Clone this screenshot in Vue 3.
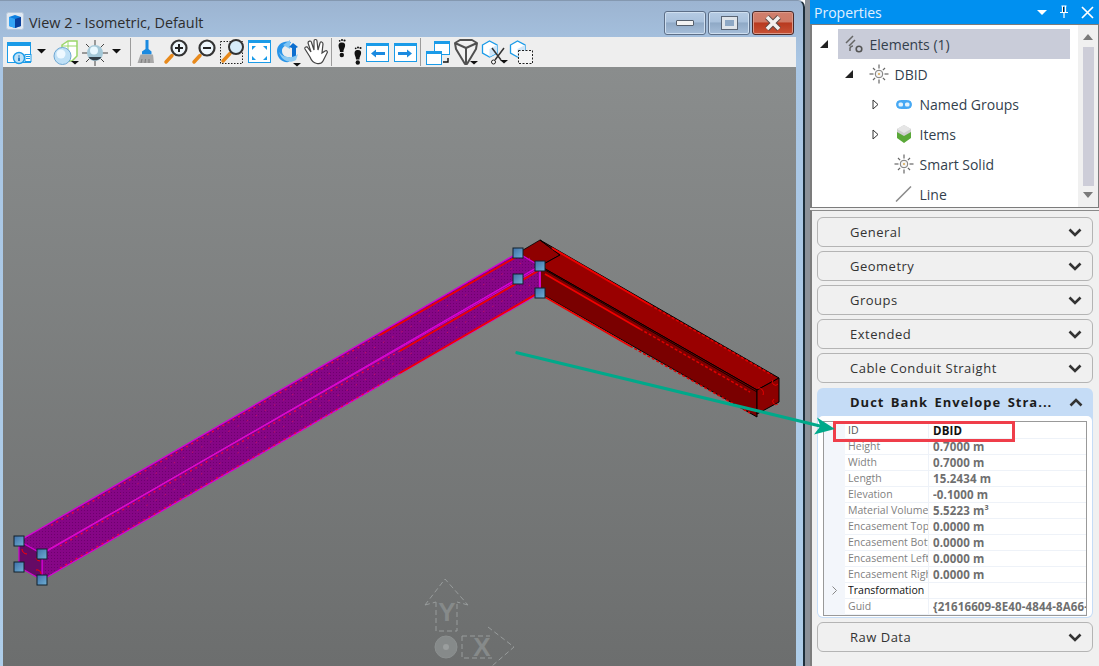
<script setup>
const tree = [
  { label: 'Elements (1)', level: 0, arrow: 'open', icon: 'elements', selected: true },
  { label: 'DBID', level: 1, arrow: 'open', icon: 'sun' },
  { label: 'Named Groups', level: 2, arrow: 'closed', icon: 'pill' },
  { label: 'Items', level: 2, arrow: 'closed', icon: 'items' },
  { label: 'Smart Solid', level: 2, arrow: '', icon: 'sun' },
  { label: 'Line', level: 2, arrow: '', icon: 'line' }
]
const sectionsTop = ['General', 'Geometry', 'Groups', 'Extended', 'Cable Conduit Straight']
const props = [
  { name: 'ID', value: 'DBID', strong: true },
  { name: 'Height', value: '0.7000 m' },
  { name: 'Width', value: '0.7000 m' },
  { name: 'Length', value: '15.2434 m' },
  { name: 'Elevation', value: '-0.1000 m' },
  { name: 'Material Volume', value: '5.5223 m³' },
  { name: 'Encasement Top', value: '0.0000 m' },
  { name: 'Encasement Bottom', value: '0.0000 m' },
  { name: 'Encasement Left', value: '0.0000 m' },
  { name: 'Encasement Right', value: '0.0000 m' },
  { name: 'Transformation', value: '', group: true },
  { name: 'Guid', value: '{21616609-8E40-4844-8A66-0F2B' }
]
const handles = [
  [518, 253], [540, 266], [518, 279], [540, 293],
  [19, 541], [42, 554], [19, 567], [42, 580]
]
const rays = [0, 45, 90, 135, 180, 225, 270, 315]
</script>

<template>
  <div class="page">
    <section class="win">
      <header class="titlebar">
        <svg class="appicon" viewBox="0 0 18 18">
          <rect x="0.5" y="0.5" width="17" height="17" rx="2" fill="#dfe8f2" stroke="#b8c8da" />
          <path d="M3 5 L9 3 L15 5 V14 L9 16 L3 14 Z" fill="#0d7fe0" />
          <path d="M3 5 L9 7 V16 L3 14 Z" fill="#35a5f5" />
          <path d="M9 7 L15 5 V14 L9 16 Z" fill="#0a3f9c" />
        </svg>
        <span class="title">View 2 - Isometric, Default</span>
        <div class="winbtns">
          <button class="wb"><span class="glyph-min"></span></button>
          <button class="wb"><span class="glyph-max"></span></button>
          <button class="wb close">
            <svg width="20" height="16" viewBox="0 0 20 16">
              <path d="M4 2 L16 14 M16 2 L4 14" stroke="#5c4a48" stroke-width="5.4" />
              <path d="M4 2 L16 14 M16 2 L4 14" stroke="#f4f0ee" stroke-width="3.6" />
            </svg>
          </button>
        </div>
      </header>

      <div class="toolbar">
        <svg class="ic" viewBox="0 0 28 30">
          <rect x="3.5" y="5.5" width="23" height="20" fill="#fff" stroke="#1b9be8" />
          <rect x="3" y="5" width="24" height="4" fill="#1b9be8" />
          <circle cx="15" cy="21" r="5.5" fill="#bfe2f8" stroke="#1b9be8" stroke-width="1.4" />
          <path d="M15 18.5v1M15 20.5v3.5" stroke="#0b6fc0" stroke-width="1.6" />
          <rect x="21" y="17.5" width="6" height="7" fill="#fff" stroke="#1b9be8" />
          <path d="M22 19.5h4M22 21.5h4" stroke="#1b9be8" />
        </svg>
        <svg class="car" viewBox="0 0 18 30"><path d="M5 12h9l-4.500 4.500z" fill="#111" /></svg>
        <svg class="ic" viewBox="0 0 28 30">
          <path d="M12 8 L18 4 H27 V19 L22 24 H12 Z" fill="#fff" stroke="#9ad66a" stroke-width="1.500" />
          <path d="M18 4 V9 H27 M18 9 L12 9 M18 9 V15" stroke="#9ad66a" fill="none" />
          <circle cx="12.500" cy="19" r="8.500" fill="#bfe0f6" stroke="#6fa8d4" />
          <circle cx="11" cy="17" r="4.500" fill="#eef8ff" />
          <path d="M21 24h8l-4 3.500z" fill="#111" />
        </svg>
        <svg class="ic sunic" viewBox="0 0 28 30">
          <path d="M15 3v26M2 16h26M6 7l18 18M24 7L6 25" stroke="#444" stroke-width="1" />
          <circle cx="15" cy="16" r="8" fill="#a4c8d8" />
          <circle cx="14" cy="13.500" r="4" fill="#e8f8ff" />
          <path d="M8.500 20a8 8 0 0 0 13 0z" fill="#333f48" />
        </svg>
        <svg class="car" viewBox="0 0 18 30"><path d="M4 12h9l-4.500 4.500z" fill="#111" /></svg>
        <i class="sep first"></i>
        <svg class="ic" viewBox="0 0 28 30">
          <path d="M11.500 3h3v9l3 2.500v3H8v-3l3.500-2.500z" fill="#1b8ae0" />
          <path d="M6.500 17.500h12.500l1 8.500H3.500z" fill="#a8a8a8" />
          <path d="M7 26l1-4M11 26l.5-4M15 26l0-4" stroke="#7c7c7c" />
        </svg>
        <svg class="ic" viewBox="0 0 28 30">
          <path d="M4 25 L10 18.500" stroke="#e88a1c" stroke-width="3.500" stroke-linecap="round" />
          <circle cx="17" cy="11" r="7.500" fill="#eef6fb" stroke="#333" stroke-width="2.200" />
          <path d="M13 11h8M17 7v8" stroke="#222" stroke-width="2" />
        </svg>
        <svg class="ic" viewBox="0 0 28 30">
          <path d="M4 25 L10 18.500" stroke="#e88a1c" stroke-width="3.500" stroke-linecap="round" />
          <circle cx="17" cy="11" r="7.500" fill="#eef6fb" stroke="#333" stroke-width="2.200" />
          <path d="M13 11h8" stroke="#222" stroke-width="2" />
        </svg>
        <svg class="ic" viewBox="0 0 28 30">
          <rect x="2.500" y="4.500" width="22" height="22" fill="none" stroke="#222" stroke-dasharray="1.500 1.500" />
          <path d="M5 24 L12 16.500" stroke="#e88a1c" stroke-width="3.500" stroke-linecap="round" />
          <circle cx="18" cy="10" r="7" fill="#d6ecfa" stroke="#333" stroke-width="2" />
        </svg>
        <svg class="ic" viewBox="0 0 28 30">
          <rect x="2.500" y="3.500" width="22" height="22" fill="#fff" stroke="#1b9be8" />
          <rect x="2" y="3" width="23" height="3" fill="#1b9be8" />
          <path d="M6 9h4L6 13zM21 9h-4l4 4zM6 23h4l-4-4zM21 23h-4l4-4z" fill="#1b9be8" />
        </svg>
        <svg class="ic" viewBox="0 0 28 30">
          <path d="M3 14 C3 7 10 3 17 5 L15 9 C11 8 8 10 8 14 C8 18 12 21 16 20 L15 25 C8 26 3 21 3 14Z" fill="#2a94e8" />
          <path d="M16 3 L9 8 L16 12Z" fill="#7cc4f4" />
          <path d="M19 6 L24 10 L22 11 V21 H18 V11 L15 10Z" fill="#0d6fd0" />
          <path d="M5 15 C9 21 18 22 24 17 L22 23 C15 27 8 24 5 15Z" fill="#8ccaf2" />
          <path d="M19 26h8l-4 3.500z" fill="#111" />
        </svg>
        <svg class="ic" viewBox="0 0 28 30">
          <path d="M8 20 L3 12 C2 10 5 9 6 11 L9 15 L6 6 C6 4 9 3 9.500 5.500 L12 13 L12 4 C12 2 15 2 15 4 L16 13 L18 6 C18.500 4 21 5 21 7 L20 16 L23 14 C25 13 26 15 25 16 L21 24 C19 28 11 28 8 20Z" fill="#fff" stroke="#444" stroke-width="1.200" />
        </svg>
        <i class="sep"></i>
        <svg class="ic" viewBox="0 0 28 30">
          <path d="M3.500 8.500 C3.500 6 5.500 5.500 7 5.500 C9.500 5.500 10.500 7 10 9.500 C9.500 11.500 8.500 12.500 8.500 14 L8.500 15 L5 15 C5 12.500 3.500 11 3.500 8.500Z" fill="#111" />
          <ellipse cx="6.800" cy="18" rx="2.200" ry="2.300" fill="#111" />
          <circle cx="9.500" cy="3.500" r="1.100" fill="#111" /><circle cx="7" cy="3" r="1" fill="#111" /><circle cx="4.700" cy="3.800" r="0.900" fill="#111" />
          <path d="M19.500 16 C19.500 13.500 21.500 13 23 13 C25.500 13 26.500 14.500 26 17 C25.500 19 24.500 20 24.500 21.500 L24.500 22.500 L21 22.500 C21 20 19.500 18.500 19.500 16Z" fill="#111" />
          <ellipse cx="22.800" cy="25.500" rx="2.200" ry="2.300" fill="#111" />
          <circle cx="25.500" cy="11" r="1.100" fill="#111" /><circle cx="23" cy="10.500" r="1" fill="#111" /><circle cx="20.700" cy="11.300" r="0.900" fill="#111" />
        </svg>
        <svg class="ic" viewBox="0 0 28 30">
          <rect x="3.500" y="6.500" width="22" height="18" fill="#fff" stroke="#1b9be8" />
          <rect x="3" y="6" width="23" height="3" fill="#1b9be8" />
          <path d="M8 16.500 L13 12.500 V15 H22 V18 H13 V20.500Z" fill="#1b8ae0" />
        </svg>
        <svg class="ic" viewBox="0 0 28 30">
          <rect x="3.500" y="6.500" width="22" height="18" fill="#fff" stroke="#1b9be8" />
          <rect x="3" y="6" width="23" height="3" fill="#1b9be8" />
          <path d="M21 16.500 L16 12.500 V15 H7 V18 H16 V20.500Z" fill="#1b8ae0" />
        </svg>
        <i class="sep"></i>
        <svg class="ic" viewBox="0 0 28 30">
          <rect x="10.500" y="5.500" width="15" height="12" fill="#fff" stroke="#1b9be8" />
          <rect x="10" y="4" width="16" height="3" fill="#1b9be8" />
          <rect x="2.500" y="15.500" width="15" height="12" fill="#fff" stroke="#1b9be8" />
          <rect x="2" y="14" width="16" height="3" fill="#1b9be8" />
          <path d="M19 25h5v-4" fill="none" stroke="#111" stroke-width="1.400" />
        </svg>
        <svg class="ic" viewBox="0 0 28 30">
          <path d="M3 6 L8 3 H20 L25 6 L24 12 L15 27 L13 27 L4 12 Z M3 6 L14 11 L25 6 M14 11 V27" fill="#f2f2f2" stroke="#505050" stroke-width="2" stroke-linejoin="round" />
          <path d="M18 24h8l-4 3.500z" fill="#111" />
        </svg>
        <svg class="ic" viewBox="0 0 28 30">
          <path d="M2.500 8 L9.500 4 L17 8 V16 L9.500 20 L2.500 16Z" fill="#fff" stroke="#1b9be8" stroke-width="1.300" />
          <path d="M9.500 12 L17 8 V16 L9.500 20Z" fill="#cfe6f8" />
          <path d="M12 11 L21 23 M24 11 L15 23" stroke="#333" stroke-width="1.500" />
          <circle cx="13.500" cy="25" r="2" fill="#fff" stroke="#222" />
          <path d="M20 23h8l-4 3.500z" fill="#111" />
        </svg>
        <svg class="ic" viewBox="0 0 28 30">
          <path d="M2.500 8 L9.500 4 L17 8 V16 L9.500 20 L2.500 16Z" fill="#fff" stroke="#1b9be8" stroke-width="1.300" />
          <path d="M9.500 12 L17 8 V16 L9.500 20Z" fill="#cfe6f8" />
          <rect x="10.500" y="13.500" width="14" height="13" fill="#f4f4f4" stroke="#222" stroke-dasharray="2 1.500" />
        </svg>
      </div>

      <div class="viewport">
        <svg class="model" viewBox="3 67 793 599">
          <defs>
            <linearGradient id="hf" x1="0" y1="0" x2="1" y2="1">
              <stop offset="0" stop-color="#3f6fa8" />
              <stop offset="1" stop-color="#6fb0d4" />
            </linearGradient>
            <pattern id="hatch" width="3" height="3" patternUnits="userSpaceOnUse">
              <rect width="3" height="3" fill="#860686" />
              <rect width="1" height="1" fill="#6e006e" />
            </pattern>
          </defs>
          <polygon points="518,253 540,240 560,255 540,266" fill="#8f0000" stroke="#000" stroke-width="0.800" />
          <polygon points="540,240 779,378 757,390 540,266 560,255" fill="#990000" stroke="#000" />
          <polygon points="540,266 757,390 757,417 540,293" fill="#7a0000" stroke="#000" />
          <polygon points="757,390 779,378 779,402 757,414" fill="#8c0000" stroke="#000" />
          <path d="M545 270 L757 392" stroke="#000" stroke-width="0.800" />
          <path d="M552 248 L650 305" stroke="#f00000" stroke-width="2" />
          <path d="M650 305 L772 375" stroke="#e00000" stroke-width="1.600" stroke-dasharray="3 2" />
          <path d="M545 274 L640 329" stroke="#f00000" stroke-width="1.800" />
          <path d="M640 329 L750 392" stroke="#e00000" stroke-width="1.500" stroke-dasharray="3 2" />
          <path d="M545 297 L630 346" stroke="#f00000" stroke-width="1.800" />
          <path d="M630 346 L750 413" stroke="#e00000" stroke-width="1.500" stroke-dasharray="3 2" />
          <path d="M773 380 a3 3 0 0 0 5 4 M774 399 a3 3 0 0 0 4 5 M758 388 a5 5 0 0 1 5 7" fill="none" stroke="#f00" stroke-width="0.800" />

          <polygon points="518,253 540,266 42,554 19,541" fill="url(#hatch)" stroke="#d800d8" stroke-width="1.300" />
          <polygon points="540,266 540,293 42,580 42,554" fill="url(#hatch)" stroke="#d800d8" stroke-width="1.300" />
          <polygon points="19,541 42,554 42,580 19,567" fill="#650a65" stroke="#d000d0" stroke-width="1.200" />
          <path d="M42 553 L540 268" stroke="#e010c0" stroke-width="0.900" />
          <path d="M518 256 L380 335" stroke="#f00000" stroke-width="1.800" />
          <path d="M380 335 L50 526" stroke="#f00040" stroke-width="1.400" stroke-dasharray="2 4" />
          <path d="M538 271 L400 351" stroke="#f00000" stroke-width="1.800" />
          <path d="M400 351 L60 546" stroke="#f00040" stroke-width="1.400" stroke-dasharray="2 4" />
          <path d="M538 293 L400 373" stroke="#f00000" stroke-width="1.800" />
          <path d="M400 373 L60 568" stroke="#f00040" stroke-width="1.400" stroke-dasharray="2 4" />
          <path d="M530 258 L120 494" stroke="#c81060" stroke-width="1" stroke-dasharray="1.500 9" />
          <path d="M530 285 L130 515" stroke="#c81060" stroke-width="1" stroke-dasharray="1.500 9" />
          <path d="M22 549 a5 5 0 0 0 5 5 M36 570 a4 4 0 0 1 5 4 M36 558 a4 4 0 0 0 4 3" fill="none" stroke="#f00" />
          <path d="M540 266 V293" stroke="#f010e0" stroke-width="1.200" />

          <rect v-for="(h, i) in handles" :key="i" :x="h[0] - 5" :y="h[1] - 5" width="10" height="10" fill="url(#hf)" stroke="#10202c" stroke-width="1" />

          <g class="triad">
            <path d="M425 605 L445 579 L468 605 M436 602 V631 H457 V602 M425 605 L436 602 M468 605 L457 602" />
            <path d="M462 636 H490 M462 636 V658 H492 M488 627 L514 647 L492 666" />
            <circle cx="446" cy="647" r="11" class="hub" />
            <circle cx="446" cy="647" r="3" class="hubdot" />
            <text x="447" y="621" class="axis">Y</text>
            <text x="482" y="656" class="axis">X</text>
          </g>
        </svg>
      </div>
    </section>

    <div class="divider"></div>

    <aside class="panel">
      <header class="panelhead">
        <span>Properties</span>
        <div class="headicons">
          <svg width="10" height="5" viewBox="0 0 10 5"><path d="M0 0h10L5 5z" fill="#fff" /></svg>
          <svg width="10" height="14" viewBox="0 0 10 14"><path d="M2.500 1h5M3.500 1v6M6.500 1v6M1 7.500h8M5 8v5" stroke="#fff" stroke-width="1.200" fill="none" /><path d="M4.500 2v5" stroke="#222" stroke-width="1" /></svg>
          <svg width="13" height="13" viewBox="0 0 13 13"><path d="M1 1L12 12M12 1L1 12" stroke="#fff" stroke-width="1.700" /></svg>
        </div>
      </header>

      <div class="treebox">
        <div class="tree">
          <div v-for="row in tree" :key="row.label + row.level" class="row" :style="{ paddingLeft: 8 + row.level * 25 + 'px' }">
            <span class="arrow" :class="{ shut: row.arrow === 'closed' }">
              <svg v-if="row.arrow === 'open'" width="8" height="8" viewBox="0 0 8 8"><path d="M8 0V8H0z" fill="#222" /></svg>
              <svg v-else-if="row.arrow === 'closed'" width="7" height="11" viewBox="0 0 7 11"><path d="M1 1L6 5.500L1 10z" fill="#fff" stroke="#333" /></svg>
            </span>
            <div class="cell" :class="{ selected: row.selected }">
              <span class="ticon">
                <svg v-if="row.icon === 'elements'" width="18" height="18" viewBox="0 0 18 18">
                  <path d="M1 8L8 1M4 11L10 5" stroke="#666" stroke-width="1.500" />
                  <path d="M5 16V13a3 3 0 0 1 3-2" stroke="#666" stroke-width="1.500" fill="none" />
                  <circle cx="14" cy="14" r="2.800" fill="none" stroke="#555" stroke-width="1.600" />
                </svg>
                <svg v-else-if="row.icon === 'sun'" width="20" height="20" viewBox="0 0 20 20">
                  <g stroke="#666" stroke-width="1.200">
                    <line v-for="r in rays" :key="r" x1="10" y1="4.500" x2="10" :y2="r % 90 ? 1.500 : 0.500" :transform="`rotate(${r} 10 10)`" />
                  </g>
                  <circle cx="10" cy="10" r="3.800" fill="#f4f4f4" stroke="#777" />
                  <circle cx="10" cy="10" r="1" fill="#d8a850" />
                </svg>
                <svg v-else-if="row.icon === 'pill'" width="16" height="9" viewBox="0 0 16 9">
                  <rect x="0.500" y="0.500" width="15" height="8" rx="4" fill="#46a8f4" stroke="#46a8f4" />
                  <rect x="2.500" y="2.500" width="4.500" height="4" rx="1.500" fill="#e4f3fd" />
                  <rect x="9" y="2.500" width="4.500" height="4" rx="1.500" fill="#e4f3fd" />
                </svg>
                <svg v-else-if="row.icon === 'items'" width="14" height="18" viewBox="0 0 14 18">
                  <path d="M7 0L14 4V11L7 15L0 11V4Z" fill="#cfcfcf" />
                  <path d="M7 0L14 4L7 8L0 4Z" fill="#e6e6e6" />
                  <path d="M0 7L7 11L14 7V13L7 18L0 13Z" fill="#5aa838" />
                </svg>
                <svg v-else width="17" height="16" viewBox="0 0 17 16"><path d="M1 15.500L16 .5" stroke="#8a8a8a" stroke-width="1.500" /></svg>
              </span>
              <span class="tlabel">{{ row.label }}</span>
            </div>
          </div>
        </div>
        <div class="scroll">
          <svg width="10" height="6" viewBox="0 0 10 6"><path d="M0 6L5 0L10 6z" fill="#7a7a7a" /></svg>
          <div class="thumb"></div>
          <svg width="10" height="6" viewBox="0 0 10 6"><path d="M0 0L5 6L10 0z" fill="#7a7a7a" /></svg>
        </div>
      </div>

      <div class="accordion">
        <div v-for="s in sectionsTop" :key="s" class="exp">
          <span>{{ s }}</span>
          <svg class="chev" width="14" height="9" viewBox="0 0 14 9"><path d="M1.500 1.500L7 7L12.500 1.500" fill="none" stroke="#333" stroke-width="2.600" /></svg>
        </div>

        <div class="open">
          <div class="openhead">
            <span>Duct Bank Envelope Stra...</span>
            <svg class="chev" width="14" height="9" viewBox="0 0 14 9"><path d="M1.500 7.500L7 2L12.500 7.500" fill="none" stroke="#333" stroke-width="2.600" /></svg>
          </div>
          <div class="openbody">
            <div class="table">
              <div v-for="p in props" :key="p.name" class="prow">
                <span class="gutter">
                  <svg v-if="p.group" width="5" height="9" viewBox="0 0 5 9"><path d="M.5 .5L4.500 4.500L.5 8.500" fill="none" stroke="#888" /></svg>
                </span>
                <span class="pname" :class="{ idname: p.strong, grp: p.group }">{{ p.name }}</span>
                <span class="pval" :class="{ strong: p.strong }">{{ p.value }}</span>
              </div>
            </div>
          </div>
        </div>

        <div class="exp">
          <span>Raw Data</span>
          <svg class="chev" width="14" height="9" viewBox="0 0 14 9"><path d="M1.500 1.500L7 7L12.500 1.500" fill="none" stroke="#333" stroke-width="2.600" /></svg>
        </div>
      </div>
    </aside>

    <div class="callout"></div>
    <svg class="arrowlay" viewBox="0 0 1099 666">
      <path d="M517 352.700 L820 426" stroke="#00a98a" stroke-width="3.200" stroke-linecap="round" />
      <path d="M835 429 L817 417.500 L820.500 426 L814 434.500 Z" fill="#00a98a" />
    </svg>
  </div>
</template>

<style>
html, body { margin: 0; background: #fff; }
</style>

<style scoped>
.page {
  position: relative;
  display: flex;
  width: 1099px;
  height: 666px;
  overflow: hidden;
  font-family: "Open Sans", "Noto Sans", sans-serif;
  background: #fff;
}
.win {
  width: 805px;
  height: 666px;
  box-sizing: border-box;
  display: flex;
  flex-direction: column;
  padding: 0 7px 0 3px;
  flex: none;
  background: linear-gradient(#9cb4d1, #a9c6e4 60px, #aecde9);
  border-right: 2px solid #1d2f3c;
  border-top: 1px solid #8498b0;
  border-top-right-radius: 7px;
}
.titlebar {
  height: 36px;
  display: flex;
  align-items: center;
  flex: none;
  position: relative;
}
.appicon { width: 18px; height: 18px; margin: 4px 0 0 3px; }
.title { margin: 6px 0 0 5px; font-size: 14.4px; color: #2d2d2d; white-space: nowrap; }
.winbtns { margin-left: auto; margin-right: 2px; display: flex; gap: 2px; margin-top: 7px; }
.wb {
  width: 42px;
  height: 24px;
  padding: 0;
  display: flex;
  align-items: center;
  justify-content: center;
  border: 1px solid #5d6f88;
  border-radius: 3px;
  background: linear-gradient(#b6cbe3 0, #a9c1dc 45%, #8fa9c6 50%, #a6bed9 100%);
  box-shadow: inset 0 0 0 1px #cfdff0;
}
.glyph-min { width: 16px; height: 4px; background: #f2f2f2; border: 1px solid #555f6c; border-radius: 1px; }
.glyph-max { width: 9px; height: 6px; border: 3px solid #dfe4ea; outline: 1px solid #596474; background: #8ea8c5; }
.wb.close {
  border-color: #4a2a2a;
  background: linear-gradient(#d07f6d 0, #cf7a66 45%, #b8391f 50%, #c85236 100%);
  box-shadow: inset 0 0 0 1px #dc9a8a;
}
.toolbar {
  height: 30px;
  flex: none;
  display: flex;
  align-items: center;
  padding-left: 1px;
  background: #eeeeee;
}
.ic { width: 28px; height: 30px; flex: none; overflow: visible; }
.car { width: 18px; height: 30px; flex: none; }
.sunic { margin-left: 2px; }
.sep { width: 1px; height: 28px; background: #9c9c9c; margin: 0 3px 0 1px; flex: none; }
.sep.first { margin-left: 4px; }
.viewport {
  flex: 1;
  min-height: 0;
  position: relative;
  background: linear-gradient(#8a8d8d, #6c6e6e);
}
.model { position: absolute; inset: 0; width: 100%; height: 100%; }
.triad path { fill: none; stroke: #989c9c; stroke-width: 1; stroke-dasharray: 5 3; }
.hub { fill: #868a8a; stroke: #8c9090; }
.hubdot { fill: #9a9e9e; }
.axis { font-family: "Liberation Sans", sans-serif; font-weight: 700; font-size: 26px; fill: #868a8a; text-anchor: middle; }
.divider { width: 5px; flex: none; background: #8b9199; }
.panel {
  width: 289px;
  flex: none;
  display: flex;
  flex-direction: column;
  background: #f0f0f0;
}
.panelhead {
  height: 24px;
  flex: none;
  background: #0090f0;
  color: #e0f0ff;
  font-size: 14px;
  display: flex;
  align-items: center;
  padding-left: 4px;
}
.headicons { margin-left: auto; display: flex; align-items: center; gap: 12px; margin-right: 5px; }
.treebox {
  height: 184px;
  flex: none;
  display: flex;
  background: #fff;
  border: 1px solid #7c7c7c;
  border-width: 1px 1px 1px 2px;
  box-sizing: border-box;
}
.tree { flex: 1; padding-top: 4px; min-width: 0; }
.row { height: 30px; display: flex; align-items: center; box-sizing: border-box; margin-right: 8px; }
.arrow { width: 18px; flex: none; display: flex; }
.arrow.shut { padding-left: 2px; width: 16px; }
.cell { flex: 1; height: 30px; display: flex; align-items: center; }
.cell.selected { background: #c9ccd9; }
.ticon { width: 31.500px; flex: none; display: flex; justify-content: center; }
.tlabel { font-size: 14px; color: #333f4d; white-space: nowrap; }
.scroll {
  width: 20px;
  flex: none;
  background: #f0f0f0;
  display: flex;
  flex-direction: column;
  align-items: center;
  justify-content: space-between;
  padding: 9px 0;
  box-sizing: border-box;
}
.thumb { width: 11px; height: 139px; background: #cdcdd8; }
.accordion {
  flex: 1;
  margin-top: 2px;
  border-top: 1px solid #8a8a8a;
  border-left: 2px solid #7c7c7c;
  padding: 6px 6px 0 5px;
  display: flex;
  flex-direction: column;
  gap: 4px;
}
.exp {
  height: 30px;
  box-sizing: border-box;
  border: 1px solid #b4b4b4;
  border-radius: 6px;
  background: #f0f0f0;
  display: flex;
  align-items: center;
  padding: 0 10px 0 32px;
  font-size: 13px;
  letter-spacing: 0.5px;
  color: #333;
  flex: none;
}
.exp span { margin-top: -1px; }
.chev { margin-left: auto; }
.open {
  height: 230px;
  margin-top: 1px;
  box-sizing: border-box;
  flex: none;
  border-radius: 6px;
  background: #c5dcf6;
  padding: 0 1px 1px;
  display: flex;
  flex-direction: column;
}
.openhead {
  height: 28px;
  flex: none;
  display: flex;
  align-items: center;
  padding: 0 9px 0 32px;
  font-size: 13px;
  font-weight: 700;
  letter-spacing: 1px;
  word-spacing: 2px;
  color: #1c1c1c;
  white-space: nowrap;
}
.openbody {
  flex: 1;
  background: #fff;
  border-radius: 5px;
  padding: 5px 5px 2px 5px;
  min-height: 0;
}
.table { border: 1px solid #999; height: 195px; padding-top: 1px; box-sizing: border-box; overflow: hidden; }
.prow { height: 16px; display: flex; align-items: center; box-sizing: border-box; border-bottom: 1px solid #eef2f8; }
.gutter { width: 21px; height: 16px; flex: none; background: #f3f6fb; display: flex; align-items: center; justify-content: center; margin-right: 3px; }
.pname {
  width: 80px;
  flex: none;
  overflow: hidden;
  white-space: nowrap;
  font-size: 10.500px;
  color: #7f7f7f;
  border-right: 1px solid #eef2f8;
  line-height: 15px;
  height: 15px;
  margin-right: 4px;
}
.pname.idname { color: #555; }
.pname.grp { color: #111; }
.pval { white-space: nowrap; overflow: hidden; font-size: 11.500px; letter-spacing: 0.12px; font-weight: 700; color: #6f6f6f; flex: 1; line-height: 15px; }
.pval.strong { color: #111; }
.callout {
  position: absolute;
  left: 833px;
  top: 421px;
  width: 182px;
  height: 21px;
  box-sizing: border-box;
  border: 3px solid #ef3e4a;
}
.arrowlay { position: absolute; inset: 0; width: 1099px; height: 666px; pointer-events: none; }
</style>
